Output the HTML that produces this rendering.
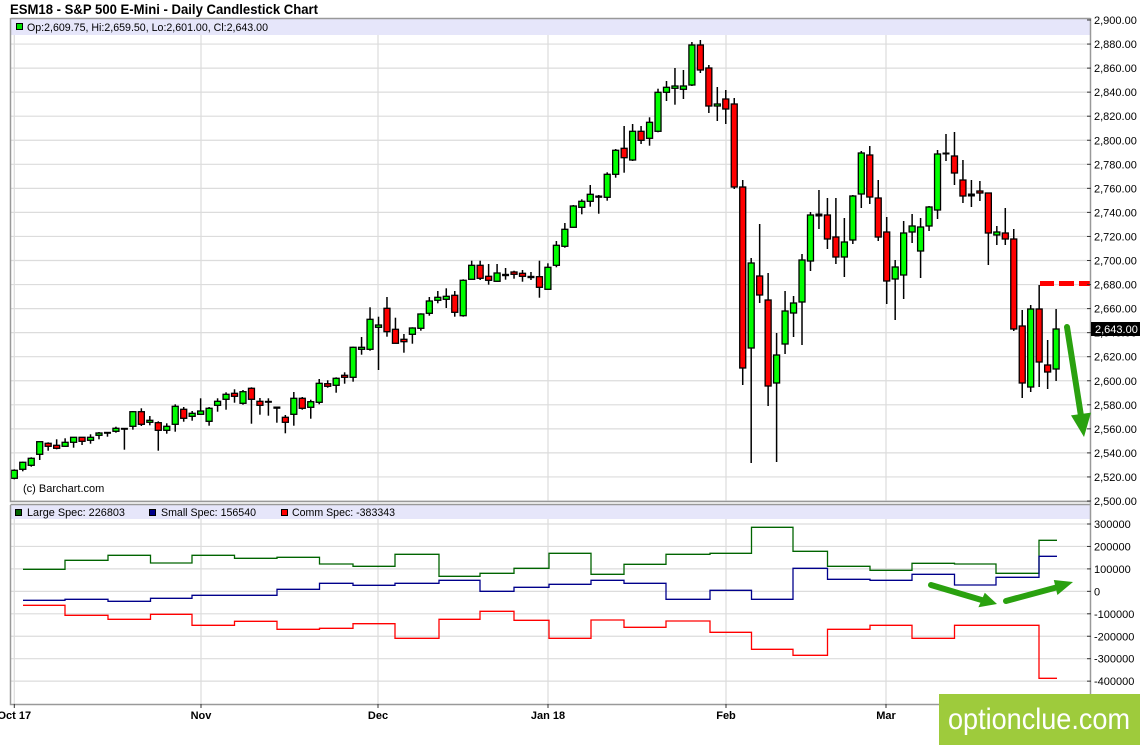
<!DOCTYPE html>
<html><head><meta charset="utf-8"><style>
html,body{margin:0;padding:0;background:#fff;}
svg{display:block;font-family:"Liberation Sans",Arial,sans-serif;}
</style></head><body>
<svg id="s" width="1140" height="745" viewBox="0 0 1140 745" xmlns="http://www.w3.org/2000/svg">
<rect width="1140" height="745" fill="#fff"/>
<text x="10" y="14" font-size="14" font-weight="bold" fill="#000" textLength="308" lengthAdjust="spacingAndGlyphs">ESM18 - S&amp;P 500 E-Mini - Daily Candlestick Chart</text>
<g id="grid"></g>
<rect x="11" y="19" width="1079" height="16" fill="#e6e6fa"/>
<rect x="16.5" y="23.5" width="6" height="6" fill="#00e000" stroke="#000"/>
<text x="27" y="31" font-size="11" fill="#000" textLength="241" lengthAdjust="spacingAndGlyphs">Op:2,609.75, Hi:2,659.50, Lo:2,601.00, Cl:2,643.00</text>
<text x="23" y="492" font-size="11" fill="#000">(c) Barchart.com</text>
<rect x="11" y="505" width="1079" height="14" fill="#e6e6fa"/>
<rect x="15.5" y="509.5" width="6" height="6" fill="#006400" stroke="#000"/>
<text x="27" y="516" font-size="11" fill="#000" textLength="98" lengthAdjust="spacingAndGlyphs">Large Spec: 226803</text>
<rect x="149.5" y="509.5" width="6" height="6" fill="#00008b" stroke="#000"/>
<text x="161" y="516" font-size="11" fill="#000" textLength="95" lengthAdjust="spacingAndGlyphs">Small Spec: 156540</text>
<rect x="281.5" y="509.5" width="6" height="6" fill="#ff0000" stroke="#000"/>
<text x="292" y="516" font-size="11" fill="#000" textLength="103" lengthAdjust="spacingAndGlyphs">Comm Spec: -383343</text>
<g id="cot"></g>
<g id="candles"></g>
<g fill="#ff0000">
<rect x="1040" y="281" width="14" height="5"/><rect x="1059" y="281" width="15" height="5"/><rect x="1079" y="281" width="11" height="5"/>
</g>
<g id="frame" stroke="#999" stroke-width="1.5" fill="none">
<path d="M10.5 18V501.5H1090.5"/><path d="M10.5 505V704.5H1090.5"/><path d="M1090.5 18V704.5"/><path d="M10.5 18.5H1090.5"/><path d="M10.5 504.5H1090.5"/>
</g>
<g id="axis"></g>
<rect x="1091" y="322" width="49" height="14" fill="#000"/>
<text x="1095" y="333" font-size="11" fill="#fff">2,643.00</text>
<g fill="#2aa10f" stroke="#2aa10f">
<line x1="1067" y1="327" x2="1081" y2="416" stroke-width="6" stroke-linecap="round"/>
<polygon points="1091,412.6 1071,415.4 1084,437" stroke="none"/>
<line x1="931" y1="585" x2="985" y2="601" stroke-width="6" stroke-linecap="round"/>
<polygon points="978.4,607.3 984.8,592.7 997,604" stroke="none"/>
<line x1="1006" y1="601" x2="1058" y2="587" stroke-width="6" stroke-linecap="round"/>
<polygon points="1057.4,595 1053.8,580 1073,582" stroke="none"/>
</g>
<rect x="939" y="694" width="201" height="51" fill="#9ecb3c"/>
<text x="948" y="729" font-size="30" fill="#fff" textLength="182" lengthAdjust="spacingAndGlyphs">optionclue.com</text>
</svg>
<script>
var NS="http://www.w3.org/2000/svg";
function el(p,t,a,txt){var e=document.createElementNS(NS,t);for(var k in a)e.setAttribute(k,a[k]);if(txt!=null)e.textContent=txt;document.getElementById(p).appendChild(e);return e;}
// grid main
for(var k=0;k<=20;k++){var y=20+k*24.05;el("grid","line",{x1:11,x2:1090,y1:y,y2:y,stroke:"#dcdcdc","stroke-width":1.2});
 var v=2900-k*20;var s=(v/1000|0)+","+String(v%1000).padStart(3,"0")+".00";
 el("axis","text",{x:1094,y:y+4,"font-size":11,fill:"#000"},s);el("axis","line",{x1:1087,x2:1091,y1:y,y2:y,stroke:"#333"});}
var lv=[300000,200000,100000,0,-100000,-200000,-300000,-400000];
for(var k=0;k<lv.length;k++){var y=524+k*22.45;el("grid","line",{x1:11,x2:1090,y1:y,y2:y,stroke:"#dcdcdc","stroke-width":1.2});
 el("axis","text",{x:1094,y:y+4,"font-size":11,fill:"#000"},String(lv[k]));el("axis","line",{x1:1087,x2:1091,y1:y,y2:y,stroke:"#333"});}
var vx=[[14.3,"Oct 17"],[201,"Nov"],[378,"Dec"],[548,"Jan 18"],[726,"Feb"],[886,"Mar"]];
vx.forEach(function(a){el("grid","line",{x1:a[0],x2:a[0],y1:35,y2:501,stroke:"#dcdcdc","stroke-width":1.2});
 el("grid","line",{x1:a[0],x2:a[0],y1:519,y2:704,stroke:"#dcdcdc","stroke-width":1.2});
 el("axis","line",{x1:a[0],x2:a[0],y1:704,y2:708,stroke:"#333"});
 el("axis","text",{x:a[0],y:719,"font-size":11,"font-weight":"bold","text-anchor":"middle",fill:"#000"},a[1]);});
// COT
var br=[23,65,108,150.5,192,234.5,277,319.5,353,395,439,480,514,549,591,624,666,710,751.5,793,827.5,870,912,954.5,996,1039,1057];
var G=[569.3,560.3,555.3,563,555.3,558.3,557.3,564,566.3,554.3,576.3,573.3,568.3,553.3,574.3,564.3,554.3,553.3,527.3,551.3,566.3,570.3,563.3,564,573.3,540.3];
var B=[600.3,599.3,601.3,598.3,595.3,595.3,589.3,583.3,585.3,583.3,580.3,591.3,587.3,584.3,580.3,583.3,599.3,590.3,599.3,568.3,579.3,580.3,574.3,585,577.3,556.3];
var R=[605.3,615.3,619.3,614.3,625.3,621.3,629.3,628.3,623.7,638.3,619.3,611.3,620.3,638.3,620,627.3,621,632.3,649.3,655.3,629.3,625.3,638.3,625.3,625.3,678.3];
function step(a,c){var d="M"+br[0]+" "+a[0];for(var i=0;i<a.length;i++){if(i>0)d+="V"+a[i];d+="H"+br[i+1];}el("cot","path",{d:d,fill:"none",stroke:c,"stroke-width":1.3});}
step(G,"#006400");step(B,"#00008b");step(R,"#ff0000");
// candles [wickTop,wickBot,bodyTop,bodyBot,color]
var C=[[469.3,479.3,470.3,478.3,"G"],[461.7,471.3,462.3,469.3,"G"],[457.3,466.7,458.3,465.3,"G"],[441.7,460,441.7,454.3,"G"],[442.3,450.7,443.3,446.3,"R"],[439.3,449.3,445.3,448.3,"R"],[438.3,446.7,442.3,446.3,"G"],[437.3,447.7,437.3,442.3,"G"],[437.3,445,437.3,441.3,"R"],[434.3,443.7,437.3,440.3,"G"],
[432,439.3,433,435.3,"G"],[432,436.7,432.3,433,"D"],[426.7,432.7,428.3,431.3,"G"],[428.3,449.7,428.3,428.7,"D"],[411,429.7,411.7,426.3,"G"],[408.3,426,411.7,424.3,"R"],[416,425.3,420.3,422.3,"G"],[421.3,450.7,422.7,430.3,"R"],[423.3,433.7,426.3,430.3,"G"],[404.3,431.7,406.3,424.3,"G"],
[407,421.7,409.3,418.3,"R"],[411,420.7,413.3,416.3,"G"],[398.3,414.7,411,414.3,"G"],[407,425.7,408.3,421.3,"G"],[398.3,411.7,401.3,405.3,"G"],[392.3,409.7,394.3,399.3,"G"],[389.3,402.7,393.3,396.3,"R"],[390,404.7,391.7,403.3,"G"],[387.3,423.7,388.3,399.3,"R"],[398,414.7,401.3,405.3,"R"],
[398.3,415.7,401.3,402.3,"D"],[406.7,422.7,407,408.3,"D"],[415,433.3,417.3,422.3,"R"],[392,425.7,398.3,414.3,"G"],[397,409.7,398.3,408.3,"R"],[399.7,418.7,401.7,407.3,"G"],[379,404.3,383.3,402.3,"G"],[380.3,387.7,383.7,386.3,"R"],[377.3,392.7,378.3,385.3,"G"],[372.3,383.7,375.3,377.3,"R"],
[346.7,381.7,347.3,377.3,"G"],[337,354.7,347.3,349.3,"G"],[307.3,350.7,319.3,349.3,"G"],[316.7,370,325,327.3,"G"],[297,336.7,308.3,331.7,"R"],[317.7,343.3,329.3,343.3,"R"],[334,352.7,339.3,341.7,"R"],[327.3,343.7,328,334.3,"G"],[313.3,330.7,314,328.3,"G"],[297,315.7,301,313.3,"G"],
[291,303.3,297.3,300.3,"G"],[288.3,308,296.3,299.3,"G"],[291,316.7,295.3,312.3,"R"],[279.3,316.7,280.3,315.7,"G"],[260.7,279.3,265.3,279.3,"G"],[260.7,280,265.3,278.3,"R"],[264,284.7,276.3,280.3,"R"],[264,281.7,273,281.3,"G"],[268,279.7,274.3,275.7,"D"],[270.7,278.7,272,274.3,"R"],
[270,281.7,273.3,276.3,"R"],[272,280,276.3,277.7,"D"],[260.7,297.7,276.7,287.3,"R"],[263.3,289.7,267.3,289.3,"G"],[241,267.3,245.3,265.3,"G"],[223,247.7,229.3,246.3,"G"],[205,227.7,206,227.3,"G"],[199.3,214.3,201.3,207.3,"G"],[185,206.7,194.3,201.3,"G"],[195,213.7,196,197.3,"D"],
[172.3,200.7,174.3,197.3,"G"],[149,177.7,150.3,174.3,"G"],[126,172.7,148.3,157.7,"R"],[124,161,131.3,160,"G"],[126,144,131.3,140.3,"R"],[117.3,145.7,122.3,138.3,"G"],[88.7,132.3,92.3,131.3,"G"],[81,101,87.3,92.3,"G"],[68,104.7,86,88.3,"G"],[70,99,86,89.3,"G"],
[42,86,45,85,"G"],[40,73,45,70,"R"],[65,113,68,106,"R"],[87,121,104,106,"G"],[90,124,99,109,"R"],[98,189,104,187,"R"],[180,385,187,368,"R"],[258,463,263,348,"G"],[224,303,276,295,"R"],[273,406,300,386,"R"],
[333,462,355,383,"G"],[291,354,311,344,"G"],[296,337,303,313,"G"],[254,345,260,302,"G"],[212,271,215,261,"G"],[190,229,214,216,"D"],[198,249,215,239,"R"],[198,264,237,257,"R"],[218,277,242,257,"G"],[195,244,196,240,"G"],
[151,208,153,194,"G"],[146,204,155,197,"R"],[180,241,198,237,"R"],[217,304,232,281,"R"],[260,320,267,279,"G"],[221,299,233,275,"G"],[214,243,226,232,"G"],[218,278,227,251,"G"],[206,231,207,226,"G"],[150,219,154,210,"G"],
[134,161,153,154,"D"],[132,185,156,173,"R"],[160,203,180,196,"R"],[180,207,194,196,"D"],[181,201,191,193,"R"],[193,265,193,233,"R"],[226,245,232,235,"G"],[208,245,233,239,"R"],[229,331,239,329,"R"],[310,398,326,383,"R"],
[305,392,309,387,"G"],[285,387,309,362,"R"],[340,389,365,372,"R"],[309,381,329,369,"G"]];
C.forEach(function(c,i){var x=14.3+i*8.47;
 el("candles","line",{x1:x,x2:x,y1:c[0],y2:c[1],stroke:"#000","stroke-width":1.5});
 if(c[4]=="D"){el("candles","rect",{x:x-3.5,y:c[2]-0.5,width:7,height:Math.max(2,c[3]-c[2]+1),fill:"#000"});}
 else el("candles","rect",{x:x-3,y:c[2],width:6,height:Math.max(1,c[3]-c[2]),fill:c[4]=="G"?"#00ff00":"#ff0000",stroke:"#000","stroke-width":1.3});});
</script>
</body></html>
